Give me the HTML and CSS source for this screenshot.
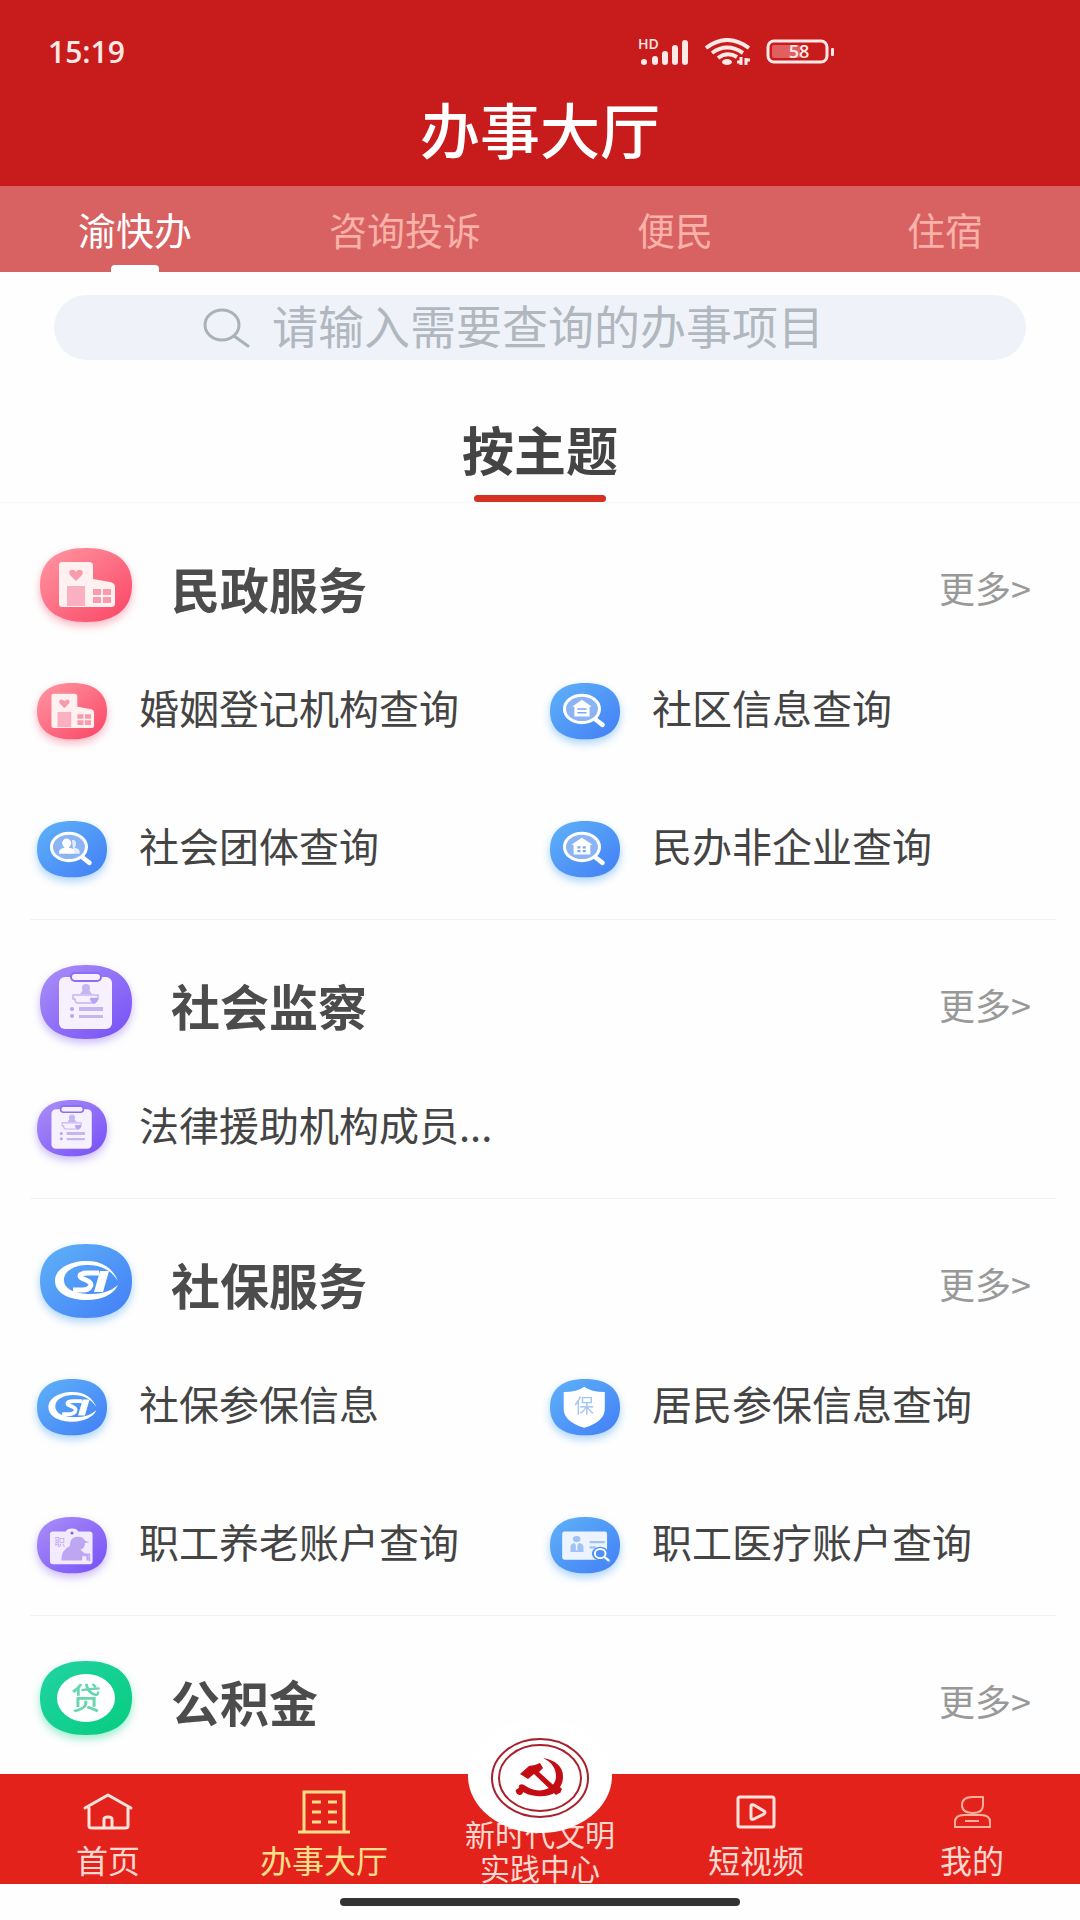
FILE: index.html
```html
<!DOCTYPE html>
<html lang="zh-CN">
<head>
    <meta charset="UTF-8">
    <meta name="viewport" content="width=device-width, initial-scale=1.0">
    <title>办事大厅</title>
    <link rel="stylesheet" href="styles.css">
</head>
<body>

    <!-- shared service icons -->
    <svg class="sprite" aria-hidden="true">
        <defs>
            <linearGradient id="pink" x1="0" y1="0" x2="1" y2="1"><stop offset="0" stop-color="#ff98a3"/><stop offset="1" stop-color="#fa4464"/></linearGradient>
            <linearGradient id="blue" x1="0" y1="0" x2="1" y2="1"><stop offset="0" stop-color="#5fb2f8"/><stop offset="1" stop-color="#427ef6"/></linearGradient>
            <linearGradient id="purple" x1="0" y1="0" x2="1" y2="1"><stop offset="0" stop-color="#aa90f8"/><stop offset="1" stop-color="#764ff6"/></linearGradient>
            <linearGradient id="green" x1="0" y1="0" x2="1" y2="1"><stop offset="0" stop-color="#22d3a4"/><stop offset="1" stop-color="#06cd7f"/></linearGradient>
            <path id="base" d="M46 0C75 0 92 13 92 37S75 74 46 74 0 61 0 37 17 0 46 0Z"/>
        </defs>
        <symbol id="i-marriage" viewBox="0 0 92 84">
            <use href="#base" fill="url(#pink)"/>
            <path fill="#fff1f0" d="M22 14h27q4 0 4 4v13l17 3q5 1 5 5v17q0 3-4 3H22q-3 0-3-3V17q0-3 3-3Z"/>
            <path fill="#f99bad" d="M36 33l-6-6q-2-4 1-5 3-1 5 2 2-3 5-2 3 1 1 5Z"/>
            <path fill="#fbb0c2" d="M27 38h18v20H27Z"/>
            <path fill="#f99bad" d="M53 41h8v6h-8zM63 41h8v6h-8zM53 49h8v6h-8zM63 49h8v6h-8z"/>
        </symbol>
        <symbol id="i-community" viewBox="0 0 92 84">
            <use href="#base" fill="url(#blue)"/>
            <path stroke="#fff" stroke-width="6" stroke-linecap="round" d="M60 48l9 7"/>
            <ellipse cx="42" cy="34" rx="23" ry="18" fill="#8bb4f5" stroke="#fff" stroke-width="4"/>
            <path fill="#fff" d="M42 22l13 9h-3v13H32V31h-3Z"/>
            <path stroke="#7aa8f4" stroke-width="2" d="M36 34h12M36 39h12"/>
        </symbol>
        <symbol id="i-group" viewBox="0 0 92 84">
            <use href="#base" fill="url(#blue)"/>
            <path stroke="#fff" stroke-width="6" stroke-linecap="round" d="M60 48l9 7"/>
            <ellipse cx="42" cy="34" rx="23" ry="18" fill="#8bb4f5" stroke="#fff" stroke-width="4"/>
            <path fill="#e3edff" d="M46 25q6-1 5 6 0 3-2 4 7 1 7 5v3h-8Z"/>
            <ellipse cx="39" cy="29" rx="6" ry="6" fill="#fff"/>
            <path fill="#fff" d="M29 43v-3q1-4 7-5v-3h6v3q7 1 7 5v3Z"/>
        </symbol>
        <symbol id="i-nonprofit" viewBox="0 0 92 84">
            <use href="#base" fill="url(#blue)"/>
            <path stroke="#fff" stroke-width="6" stroke-linecap="round" d="M60 48l9 7"/>
            <ellipse cx="42" cy="34" rx="23" ry="18" fill="#8bb4f5" stroke="#fff" stroke-width="4"/>
            <path fill="#fff" d="M42 22l14 9h-3v13H31V31h-3Z"/>
            <path fill="#7aa8f4" d="M36 33h4v3h-4zM43 33h4v3h-4zM36 38h4v3h-4zM43 38h4v3h-4z"/>
        </symbol>
        <symbol id="i-clipboard" viewBox="0 0 92 84">
            <use href="#base" fill="url(#purple)"/>
            <rect x="19" y="12" width="53" height="52" rx="6" fill="#f7f1ff"/>
            <rect x="31" y="8" width="30" height="8" rx="4" fill="#f7f1ff" stroke="#8c6df4" stroke-width="2"/>
            <circle cx="46" cy="23" r="4" fill="#c5b6f2"/>
            <path fill="#c5b6f2" d="M43 25h6l3 4H40Z"/>
            <path fill="none" stroke="#c5b6f2" stroke-width="1.5" d="M33 30h25v4q-2 4-6 4H38q-3 0-3-4h-2Z"/>
            <path fill="#b7a5f0" d="M50 33q2-1 4 0 2-1 4 0 0 4-4 6-4-2-4-6Z"/>
            <path fill="#c5b6f2" d="M39 42h24v4H39zM39 50h24v3H39z"/>
            <circle cx="32" cy="44" r="2" fill="#b7a5f0"/><circle cx="32" cy="51" r="2" fill="#b7a5f0"/>
        </symbol>
        <symbol id="i-social" viewBox="0 0 92 84">
            <use href="#base" fill="url(#blue)"/>
            <path fill="#fff" d="M78 37C73 24 62 17 47 17 29 17 15 25 15 37s14 19 32 19c15 0 27-6 31-15-7 6-16 9-27 9-16 0-27-5-27-14s10-15 24-15c13 0 23 5 30 16Z"/>
            <path fill="none" stroke="#fff" stroke-width="5" d="M59 29H48q-8 0-8 3 0 2 6 4 7 3 4 7-2 3-7 3H33"/>
            <path fill="#fff" d="M60 27h9l-6 21h-9Z"/>
        </symbol>
    </svg>

    <header class="header">
        <div class="status">
            <span class="time">15:19</span>
            <div class="status-icons">
                <svg width="52" height="28" viewBox="0 0 52 28" aria-hidden="true">
                    <text class="hd" x="0" y="11">HD</text>
                    <path stroke="#ffe9e6" stroke-width="6" stroke-linecap="round" d="M6 24v0M17 21v3M27 16v8M37 10v14M47 5v19"/>
                </svg>
                <svg width="48" height="28" viewBox="0 0 48 28" aria-hidden="true">
                    <path fill="none" stroke="#ffe9e6" stroke-width="4" d="M2 10Q23-6 45 10M8 15Q23 4 39 15M14 20Q23 13 33 19"/>
                    <ellipse cx="23" cy="24" rx="5" ry="3" fill="#ffe9e6"/>
                    <path fill="none" stroke="#ffe9e6" stroke-width="3" d="M33 24h4v-5M37 19v8M42 27v-7M42 22h4"/>
                </svg>
                <svg width="70" height="26" viewBox="0 0 70 26" aria-hidden="true">
                    <rect x="2" y="2" width="59" height="21" rx="6" fill="none" stroke="#ffe9e6" stroke-width="3"/>
                    <rect x="6" y="6" width="28" height="13" rx="2" fill="#e0605f"/>
                    <rect x="65" y="9" width="3" height="8" rx="1" fill="#ffe9e6"/>
                    <text class="battery" x="33" y="19">58</text>
                </svg>
            </div>
        </div>
        <h1 class="title">办事大厅</h1>
    </header>

    <nav class="tabs">
        <a href="#" class="tab active">渝快办</a>
        <a href="#" class="tab">咨询投诉</a>
        <a href="#" class="tab">便民</a>
        <a href="#" class="tab">住宿</a>
    </nav>

    <main class="content">
        <form class="search">
            <label for="keyword" aria-label="搜索">
                <svg class="search-icon" width="50" height="40" viewBox="0 0 50 40" aria-hidden="true">
                    <ellipse cx="20" cy="17" rx="17" ry="15" fill="none" stroke="#a9b1ba" stroke-width="3"/>
                    <path stroke="#a9b1ba" stroke-width="3" stroke-linecap="round" d="M32 28l14 10"/>
                </svg>
            </label>
            <input type="search" id="keyword" placeholder="请输入需要查询的办事项目">
        </form>

        <h2 class="theme"><span>按主题</span></h2>

        <section class="group">
            <div class="group-head">
                <svg class="icon-lg pink" aria-hidden="true"><use href="#i-marriage"/></svg>
                <h3>民政服务</h3>
                <a href="#" class="more">更多&gt;</a>
            </div>
            <div class="items">
                <a href="#" class="item"><svg class="icon-sm pink" aria-hidden="true"><use href="#i-marriage"/></svg>婚姻登记机构查询</a>
                <a href="#" class="item"><svg class="icon-sm blue" aria-hidden="true"><use href="#i-community"/></svg>社区信息查询</a>
                <a href="#" class="item"><svg class="icon-sm blue" aria-hidden="true"><use href="#i-group"/></svg>社会团体查询</a>
                <a href="#" class="item"><svg class="icon-sm blue" aria-hidden="true"><use href="#i-nonprofit"/></svg>民办非企业查询</a>
            </div>
        </section>

        <section class="group">
            <div class="group-head">
                <svg class="icon-lg purple" aria-hidden="true"><use href="#i-clipboard"/></svg>
                <h3>社会监察</h3>
                <a href="#" class="more">更多&gt;</a>
            </div>
            <div class="items">
                <a href="#" class="item"><svg class="icon-sm purple" aria-hidden="true"><use href="#i-clipboard"/></svg>法律援助机构成员...</a>
            </div>
        </section>

        <section class="group">
            <div class="group-head">
                <svg class="icon-lg blue" aria-hidden="true"><use href="#i-social"/></svg>
                <h3>社保服务</h3>
                <a href="#" class="more">更多&gt;</a>
            </div>
            <div class="items">
                <a href="#" class="item"><svg class="icon-sm blue" aria-hidden="true"><use href="#i-social"/></svg>社保参保信息</a>
                <a href="#" class="item">
                    <svg class="icon-sm blue" viewBox="0 0 92 84" aria-hidden="true">
                        <use href="#base" fill="url(#blue)"/>
                        <path fill="#fff" d="M45 10q9 7 27 7v22q0 17-27 25Q18 56 18 39V17q18 0 27-7Z"/>
                        <text class="glyph shield-glyph" x="45" y="45">保</text>
                    </svg>居民参保信息查询</a>
                <a href="#" class="item">
                    <svg class="icon-sm purple" viewBox="0 0 92 84" aria-hidden="true">
                        <use href="#base" fill="url(#purple)"/>
                        <path fill="#f2eaff" d="M21 19h17q1-4 8-4t8 4h15q4 0 4 4v35q0 4-4 4H21q-4 0-4-4V23q0-4 4-4Z"/>
                        <circle cx="46" cy="21" r="2" fill="#8460e8"/>
                        <text class="glyph pension-glyph" x="30" y="38">职</text>
                        <path fill="#bfa6f3" d="M44 32q2-6 10-6 7 0 9 5l6 2-6 1q0 7-6 9l7 6 4 2v6h-3v-5l-5-1-1 6H32q0-14 11-19Z"/>
                        <path fill="none" stroke="#bfa6f3" stroke-width="2" d="M60 49h9v9"/>
                    </svg>职工养老账户查询</a>
                <a href="#" class="item">
                    <svg class="icon-sm blue" viewBox="0 0 92 84" aria-hidden="true">
                        <use href="#base" fill="url(#blue)"/>
                        <rect x="16" y="19" width="59" height="37" rx="3" fill="#edf4ff"/>
                        <ellipse cx="35" cy="29" rx="5" ry="4" fill="#9fc2f7"/>
                        <path fill="#9fc2f7" d="M27 46v-7q0-4 5-5l3 4 3-4q6 1 6 5v7Z"/>
                        <path stroke="#edf4ff" stroke-width="2" d="M35 36v8"/>
                        <path stroke="#9fc2f7" stroke-width="3" d="M52 33h20M52 40h8"/>
                        <path stroke="#4e91f5" stroke-width="8" stroke-linecap="round" d="M72 54l5 4"/>
                        <ellipse cx="66" cy="48" rx="11" ry="9" fill="#4e91f5"/>
                        <ellipse cx="66" cy="48" rx="7" ry="6" fill="none" stroke="#fff" stroke-width="2.5"/>
                        <path stroke="#fff" stroke-width="3" stroke-linecap="round" d="M72 53l5 4"/>
                    </svg>职工医疗账户查询</a>
            </div>
        </section>

        <section class="group">
            <div class="group-head">
                <svg class="icon-lg green" viewBox="0 0 92 84" aria-hidden="true">
                    <use href="#base" fill="url(#green)"/>
                    <ellipse cx="46" cy="37" rx="29" ry="24" fill="#fff"/>
                    <text class="glyph loan-glyph" x="46" y="48">贷</text>
                </svg>
                <h3>公积金</h3>
                <a href="#" class="more">更多&gt;</a>
            </div>
        </section>
    </main>

    <footer class="bottom">
        <nav class="tabbar">
            <a href="#" class="tabbar-item">
                <svg width="54" height="44" viewBox="0 0 54 44" fill="none" stroke="#ffe3dc" stroke-width="3" stroke-linejoin="round" stroke-linecap="round" aria-hidden="true">
                    <path d="M4 18L27 5l23 13M8 18v18q0 2 3 2h33q3 0 3-2V18M23 38V29q0-2 4-2t4 2v9"/>
                </svg>
                首页
            </a>
            <a href="#" class="tabbar-item current">
                <svg width="54" height="44" viewBox="0 0 54 44" fill="none" stroke="#ffe08a" stroke-width="3" aria-hidden="true">
                    <path d="M1 42h52M7 41V2h40v39M15 12h9M31 12h9M15 22h9M31 22h9M15 32h9M31 32h9"/>
                </svg>
                办事大厅
            </a>
            <a href="#" class="tabbar-item center">
                <svg class="emblem" width="144" height="114" viewBox="0 0 144 114" aria-hidden="true">
                    <ellipse cx="72" cy="57" rx="72" ry="57" fill="#fff"/>
                    <ellipse cx="72" cy="59" rx="48" ry="39" fill="none" stroke="#a8202c" stroke-width="2"/>
                    <ellipse cx="72" cy="59" rx="41" ry="33" fill="none" stroke="#a8202c" stroke-width="2"/>
                    <path fill="#c30d13" d="M75 39C88 41 95 48 95 57c0 5-1 8-3 11l2 2-2 4-4-1c-6 4-13 5-20 4-6-1-10-2-13-4 0 4-6 4-7 0-1-2 1-3 3-4-1-3 2-5 5-3 8 6 17 7 25 3 5-3 7-7 7-12 0-7-4-14-13-18Z"/>
                    <path fill="#c30d13" d="M52 55l9-8q5 0 11-3l3 5-4 4 22 20-5 3-22-21-6 5Z"/>
                </svg>
                <span>新时代文明<br>实践中心</span>
            </a>
            <a href="#" class="tabbar-item">
                <svg width="54" height="44" viewBox="0 0 54 44" fill="none" stroke="#ffe3dc" stroke-width="3" stroke-linejoin="round" aria-hidden="true">
                    <rect x="9" y="7" width="36" height="30" rx="2"/>
                    <path d="M22 16v12q0 2 3 1l10-5q2-2 0-3l-10-6q-3-1-3 1Z"/>
                </svg>
                短视频
            </a>
            <a href="#" class="tabbar-item">
                <svg width="54" height="44" viewBox="0 0 54 44" fill="none" stroke="#ffb09c" stroke-width="2" stroke-linejoin="round" aria-hidden="true">
                    <path d="M38 7v8q0 8-10 8-11 0-11-8t11-8ZM10 37v-5q0-7 9-7h17q9 0 9 7v5ZM20 31h14"/>
                </svg>
                我的
            </a>
        </nav>
        <div class="home-bar"></div>
    </footer>

</body>
</html>
```

FILE: styles.css
```css
* { box-sizing: border-box; }
body { margin: 0; height: 100vh; display: flex; flex-direction: column; background: #fefefe; color: #444; font-family: "Noto Sans CJK SC", sans-serif; }
h1, h2, h3 { margin: 0; }
a { color: inherit; text-decoration: none; }
.sprite { position: absolute; width: 0; height: 0; }

/* header */
.header { background: #c81c1c; color: #fff; padding-top: 30px; height: 186px; flex: none; }
.status { display: flex; align-items: center; justify-content: space-between; height: 44px; padding: 0 244px 0 48px; }
.time { font-family: "Open Sans", sans-serif; font-size: 30px; font-weight: 600; line-height: 40px; color: #ffe9e6; }
.status-icons { display: flex; align-items: center; gap: 14px; }
.hd { font: 600 14px "Open Sans", sans-serif; fill: #ffe9e6; }
.battery { font: 600 18px "Open Sans", sans-serif; fill: #ffe9e6; text-anchor: middle; }
.title { font-size: 60px; font-weight: 500; line-height: 108px; text-align: center; }

/* top tabs */
.tabs { display: grid; grid-template-columns: repeat(4, 1fr); height: 86px; flex: none; background: #d86161; }
.tab { position: relative; line-height: 86px; text-align: center; font-size: 38px; color: #f9b1aa; }
.tab.active { color: #fff; }
.tab.active::after { content: ""; position: absolute; left: 50%; bottom: 0; width: 48px; height: 7px; margin-left: -24px; border-radius: 4px 4px 0 0; background: #fff; }

.content { flex: 1; min-height: 0; overflow: hidden; }

/* search */
.search { display: flex; align-items: center; gap: 20px; height: 65px; margin: 23px 54px 0; padding-left: 148px; border-radius: 33px; background: #eff3f9; }
.search label { display: flex; }
.search input { flex: 1; min-width: 0; height: 64px; padding: 0 0 8px; border: none; outline: none; background: none; font-family: inherit; font-size: 46px; line-height: 56px; color: #444; }
.search input::placeholder { color: #b0b7bf; opacity: 1; }

/* theme heading */
.theme { height: 143px; padding-top: 43px; border-bottom: 1px solid #f7f7f7; text-align: center; font-size: 52px; line-height: 92px; }
.theme span { display: inline-block; }
.theme span::after { content: ""; display: block; width: 132px; height: 7px; margin: 0 auto; border-radius: 4px; background: #d53022; }

/* service groups */
.group { margin: 0 24px 0 30px; border-bottom: 1px solid #f2f2f2; }
.group:last-child { border-bottom: none; }
.group-head { display: flex; align-items: center; height: 140px; padding: 28px 1px 0 10px; }
.group-head h3 { margin-left: 39px; font-size: 49px; color: #4c4c4c; }
.more { margin-left: auto; padding-right: 24px; font-size: 36px; color: #999; }
.items { display: grid; grid-template-columns: 1fr 1fr; }
.item { display: flex; align-items: center; gap: 32px; height: 138px; padding: 0 0 10px 7px; font-size: 40px; white-space: nowrap; color: #444; }
.icon-lg { width: 92px; height: 84px; margin-top: 6px; overflow: visible; }
.icon-sm { width: 70px; height: 64px; margin-top: 16px; overflow: visible; }
.pink { filter: drop-shadow(0 4px 4px #fbb6c3); }
.blue { filter: drop-shadow(0 4px 4px #abd4fb); }
.purple { filter: drop-shadow(0 4px 4px #cbbcfa); }
.green { filter: drop-shadow(0 4px 4px #9cecd0); }
.glyph { text-anchor: middle; font-family: "Noto Sans CJK SC", sans-serif; }
.shield-glyph { font-size: 26px; fill: #a5c6f4; }
.pension-glyph { font-size: 14px; fill: #bfa6f3; }
.loan-glyph { font-size: 30px; font-weight: 500; fill: #68d6ae; }

/* bottom bar */
.bottom { flex: none; background: #fefefe; }
.tabbar { display: grid; grid-template-columns: repeat(5, 1fr); height: 110px; background: #e3221b; }
.tabbar-item { position: relative; display: flex; flex-direction: column; align-items: center; padding-top: 16px; font-size: 32px; line-height: 50px; color: #ffd9d0; }
.current { color: #ffe08a; }
.center { padding-top: 42px; font-size: 30px; line-height: 34px; text-align: center; }
.emblem { position: absolute; top: -55px; left: 50%; margin-left: -72px; z-index: 1; }
.home-bar { width: 37%; height: 8px; margin: 14px auto; border-radius: 4px; background: #333; }
```
